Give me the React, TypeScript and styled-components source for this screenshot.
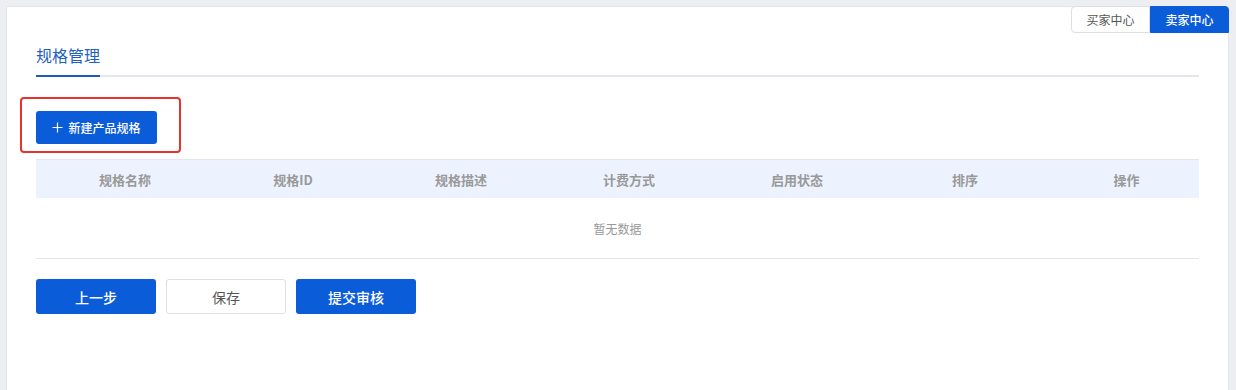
import React from "react";
import styled, { createGlobalStyle } from "styled-components";

const Global = createGlobalStyle`
  html, body { margin: 0; padding: 0; background: #eceef2; }
  body { font-family: "Noto Sans CJK SC", "Noto Sans", sans-serif; }
  * { box-sizing: border-box; }
`;

const Page = styled.div`
  padding: 6px 7px 0 6px;
  height: 390px;
  overflow: hidden;
`;

const Card = styled.div`
  position: relative;
  background: #fff;
  border: 1px solid #e2e5ea;
  border-bottom: none;
  min-height: 400px;
  padding: 37px 29px 0 29px;
`;

const Switcher = styled.div`
  position: absolute;
  top: -1px;
  right: -1px;
  display: flex;
`;

const SwitchBtn = styled.button<{ $active?: boolean }>`
  width: 79px;
  height: 27px;
  padding: 0;
  font-family: inherit;
  font-size: 12px;
  cursor: pointer;
  border: 1px solid ${(p) => (p.$active ? "#0a5cd9" : "#dcdfe4")};
  background: ${(p) => (p.$active ? "#0a5cd9" : "#fff")};
  color: ${(p) => (p.$active ? "#fff" : "#555")};
  font-weight: ${(p) => (p.$active ? 500 : 400)};
  border-radius: ${(p) => (p.$active ? "0 4px 0 0" : "4px 0 0 4px")};
`;

const TabBar = styled.div`
  display: flex;
  border-bottom: 2px solid #e3e6eb;
`;

const Tab = styled.div`
  font-size: 16px;
  line-height: 22px;
  color: #1f5fbf;
  padding-bottom: 9px;
  border-bottom: 2px solid #1c5bb8;
  margin-bottom: -2px;
`;

const Toolbar = styled.div`
  margin-top: 34px;
  display: flex;
`;

const Highlight = styled.div`
  position: relative;
  display: inline-flex;
`;

const HighlightFrame = styled.div`
  position: absolute;
  left: -16px;
  top: -14px;
  right: -24px;
  bottom: -9px;
  border: 2px solid #e8322c;
  border-radius: 4px;
  pointer-events: none;
`;

const PrimaryButton = styled.button<{ $w?: number; $h?: number; $fs?: number }>`
  display: inline-flex;
  align-items: center;
  justify-content: center;
  gap: 5px;
  width: ${(p) => p.$w ?? 120}px;
  height: ${(p) => p.$h ?? 35}px;
  padding: 0;
  border: none;
  border-radius: 3px;
  background: #0a5cd9;
  color: #fff;
  font-family: inherit;
  font-size: ${(p) => p.$fs ?? 14}px;
  font-weight: 500;
  cursor: pointer;
`;

const GhostButton = styled.button`
  width: 120px;
  height: 35px;
  padding: 0;
  border: 1px solid #dcdfe4;
  border-radius: 3px;
  background: #fff;
  color: #555;
  font-family: inherit;
  font-size: 14px;
  cursor: pointer;
`;

const Table = styled.div`
  margin-top: 15px;
  border-top: 1px solid #e3e6eb;
  border-bottom: 1px solid #e3e6eb;
`;

const HeaderRow = styled.div`
  display: grid;
  grid-template-columns: repeat(6, 168px) 1fr;
  height: 38px;
  background: #edf3fe;
`;

const HeaderCell = styled.div`
  display: flex;
  align-items: center;
  justify-content: center;
  padding-left: 10px;
  font-size: 13px;
  font-weight: 700;
  color: #999;
`;

const Empty = styled.div`
  height: 60px;
  display: flex;
  align-items: center;
  justify-content: center;
  font-size: 12px;
  color: #999;
`;

const Actions = styled.div`
  margin-top: 20px;
  display: flex;
  gap: 10px;
`;

const columns = ["规格名称", "规格ID", "规格描述", "计费方式", "启用状态", "排序", "操作"];

const PlusIcon = () => (
  <svg width="11" height="11" viewBox="0 0 11 11" aria-hidden>
    <path d="M5.5 0.5v10M0.5 5.5h10" stroke="#fff" strokeWidth="1.2" fill="none" />
  </svg>
);

export default function App() {
  return (
    <>
      <Global />
      <Page>
        <Card>
          <Switcher>
            <SwitchBtn>买家中心</SwitchBtn>
            <SwitchBtn $active>卖家中心</SwitchBtn>
          </Switcher>
          <TabBar>
            <Tab>规格管理</Tab>
          </TabBar>
          <Toolbar>
            <Highlight>
              <PrimaryButton $w={121} $h={33} $fs={12}>
                <PlusIcon />
                新建产品规格
              </PrimaryButton>
              <HighlightFrame />
            </Highlight>
          </Toolbar>
          <Table>
            <HeaderRow>
              {columns.map((c) => (
                <HeaderCell key={c}>{c}</HeaderCell>
              ))}
            </HeaderRow>
            <Empty>暂无数据</Empty>
          </Table>
          <Actions>
            <PrimaryButton>上一步</PrimaryButton>
            <GhostButton>保存</GhostButton>
            <PrimaryButton>提交审核</PrimaryButton>
          </Actions>
        </Card>
      </Page>
    </>
  );
}
